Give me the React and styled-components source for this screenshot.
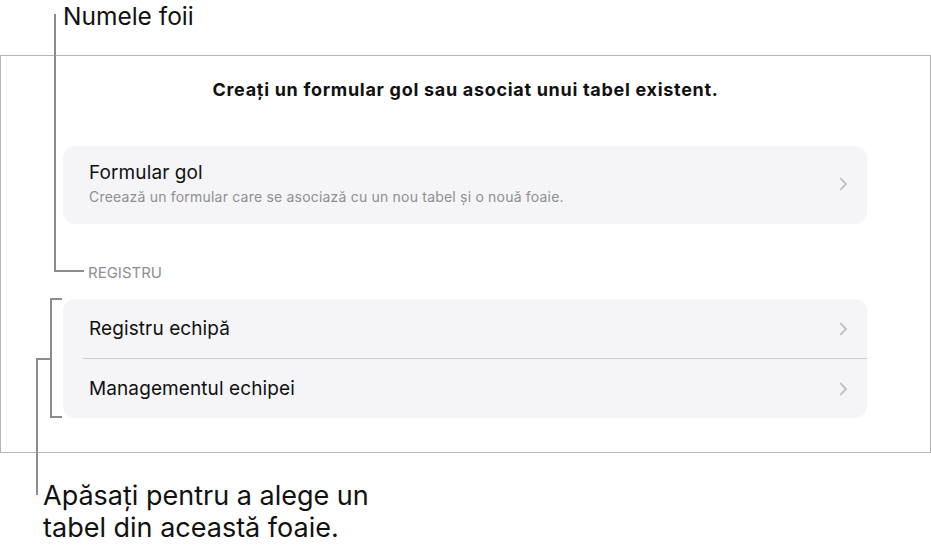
import React from "react";
import styled, { createGlobalStyle } from "styled-components";

const Global = createGlobalStyle`
  html, body { margin: 0; padding: 0; background: #ffffff; }
  body { font-family: Inter, Roboto, "Noto Sans", "Liberation Sans", sans-serif; color: #111111; }
`;

const Page = styled.div`
  position: relative;
  width: 931px;
  height: 553px;
  overflow: hidden;
`;

const CalloutText = styled.div`
  font-size: ${(p) => p.$size}px;
  line-height: 32px;
  color: #111;
  padding-left: ${(p) => p.$indent}px;
  margin-top: ${(p) => p.$top || 0}px;
  height: ${(p) => (p.$height ? `${p.$height}px` : "auto")};
  box-sizing: border-box;
`;

const Frame = styled.section`
  width: 931px;
  box-sizing: border-box;
  border: 1px solid #b4b4b4;
  padding: 23px 0 34px 62px;
  display: flex;
  flex-direction: column;
  align-items: flex-start;
`;

const Title = styled.h1`
  margin: 0;
  align-self: stretch;
  padding-right: 62px;
  text-align: center;
  font-size: 18px;
  line-height: 22px;
  font-weight: 700;
  letter-spacing: 0.7px;
  color: #111;
`;

const Card = styled.div`
  width: 804px;
  margin-top: ${(p) => p.$top}px;
  background: #f5f5f7;
  border-radius: 12px;
  display: flex;
  flex-direction: column;
`;

const Row = styled.div`
  display: flex;
  align-items: center;
  justify-content: space-between;
  padding: ${(p) => (p.$tall ? "15px 19px 18px 26px" : "0 19px 0 26px")};
  height: ${(p) => (p.$tall ? "auto" : "59px")};
  box-sizing: border-box;
`;

const Divider = styled.div`
  height: 1px;
  margin-left: 20px;
  background: #cdcdd1;
`;

const RowText = styled.div`
  display: flex;
  flex-direction: column;
  gap: 3px;
`;

const RowTitle = styled.div`
  font-size: 19px;
  line-height: 24px;
  color: #111;
  letter-spacing: 0.1px;
`;

const RowSub = styled.div`
  font-size: 14px;
  line-height: 18px;
  letter-spacing: 0.2px;
  color: #8e8e93;
`;

const SectionLabel = styled.div`
  margin-top: 40px;
  margin-left: 25px;
  font-size: 15px;
  line-height: 18px;
  color: #8e8e93;
`;

const Leaders = styled.svg`
  position: absolute;
  left: 0;
  top: 0;
  pointer-events: none;
`;

const Chevron = () => (
  <svg width="9" height="14" viewBox="0 0 9 14">
    <path d="M1.8 1.6 L7 7 L1.8 12.4" fill="none" stroke="#c2c2c6" strokeWidth="2" strokeLinecap="round" strokeLinejoin="round" />
  </svg>
);

export default function App() {
  return (
    <>
      <Global />
      <Page>
        <CalloutText $indent={63} $height={55} $size={24.5}>Numele foii</CalloutText>
        <Frame>
          <Title>Creați un formular gol sau asociat unui tabel existent.</Title>
          <Card $top={45}>
            <Row $tall>
              <RowText>
                <RowTitle>Formular gol</RowTitle>
                <RowSub>Creează un formular care se asociază cu un nou tabel și o nouă foaie.</RowSub>
              </RowText>
              <Chevron />
            </Row>
          </Card>
          <SectionLabel>REGISTRU</SectionLabel>
          <Card $top={17}>
            <Row>
              <RowTitle>Registru echipă</RowTitle>
              <Chevron />
            </Row>
            <Divider />
            <Row>
              <RowTitle>Managementul echipei</RowTitle>
              <Chevron />
            </Row>
          </Card>
        </Frame>
        <CalloutText $indent={43} $top={27} $size={27}>
          Apăsați pentru a alege un
          <br />
          tabel din această foaie.
        </CalloutText>
        <Leaders width="931" height="553" viewBox="0 0 931 553">
          <g fill="none" stroke="#8c8c8c" strokeWidth="2">
            <path d="M55 14 V271 H84" />
            <path d="M62 299 H51 V417 H62" />
            <path d="M51 359 H37 V495" />
          </g>
        </Leaders>
      </Page>
    </>
  );
}
